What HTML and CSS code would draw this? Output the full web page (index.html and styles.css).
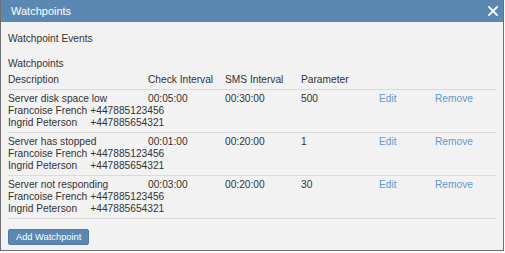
FILE: index.html
```html
<!DOCTYPE html>
<html lang="en">
<head>
    <meta charset="UTF-8">
    <meta name="viewport" content="width=device-width, initial-scale=1.0">
    <title>Watchpoints</title>
    <link rel="stylesheet" href="styles.css">
</head>
<body>
    <div class="dialog">
        <div class="dialog-header">
            <span class="dialog-title">Watchpoints</span>
            <button class="close-btn" aria-label="Close">
                <svg width="10" height="10" viewBox="0 0 10 10">
                    <path d="M1 1 L9 9 M9 1 L1 9" stroke="#fff" stroke-width="1.8" stroke-linecap="square"/>
                </svg>
            </button>
        </div>

        <div class="dialog-body">
            <div class="section-title events">Watchpoint Events</div>
            <div class="section-title">Watchpoints</div>

            <div class="wp-table">
                <div class="wp-row wp-head">
                    <div>Description</div>
                    <div>Check Interval</div>
                    <div>SMS Interval</div>
                    <div>Parameter</div>
                    <div></div>
                    <div></div>
                </div>

                <div class="wp-row">
                    <div>Server disk space low</div>
                    <div>00:05:00</div>
                    <div>00:30:00</div>
                    <div>500</div>
                    <div><a href="#" class="link">Edit</a></div>
                    <div><a href="#" class="link">Remove</a></div>
                    <div class="contacts">
                        <div>Francoise French</div><div>+447885123456</div>
                        <div>Ingrid Peterson</div><div>+447885654321</div>
                    </div>
                </div>

                <div class="wp-row">
                    <div>Server has stopped</div>
                    <div>00:01:00</div>
                    <div>00:20:00</div>
                    <div>1</div>
                    <div><a href="#" class="link">Edit</a></div>
                    <div><a href="#" class="link">Remove</a></div>
                    <div class="contacts">
                        <div>Francoise French</div><div>+447885123456</div>
                        <div>Ingrid Peterson</div><div>+447885654321</div>
                    </div>
                </div>

                <div class="wp-row">
                    <div>Server not responding</div>
                    <div>00:03:00</div>
                    <div>00:20:00</div>
                    <div>30</div>
                    <div><a href="#" class="link">Edit</a></div>
                    <div><a href="#" class="link">Remove</a></div>
                    <div class="contacts">
                        <div>Francoise French</div><div>+447885123456</div>
                        <div>Ingrid Peterson</div><div>+447885654321</div>
                    </div>
                </div>
            </div>

            <button class="add-btn">Add Watchpoint</button>
        </div>
    </div>
</body>
</html>
```

FILE: styles.css
```css
html {
    background: #fafafa;
}

body {
    margin: 0;
    font-family: "Liberation Sans", Arial, sans-serif;
    font-size: 10.2px;
    color: #333;
}

.dialog {
    width: 504px;
    height: 251px;
    box-sizing: border-box;
    border: 1px solid #6f6f6f;
    border-top: none;
    background: #f2f2f2;
}

.dialog-header {
    height: 22px;
    background: #5b88b3;
    display: flex;
    align-items: center;
    justify-content: space-between;
    padding: 0 5px 0 10px;
}

.dialog-title {
    color: #fff;
    font-size: 11px;
}

.close-btn {
    background: none;
    border: none;
    padding: 0;
    width: 10px;
    height: 10px;
    display: flex;
    cursor: pointer;
}

.dialog-body {
    padding: 0 7px;
}

.section-title {
    line-height: 12px;
}

.section-title.events {
    margin-top: 11px;
    margin-bottom: 13px;
}

.wp-row {
    display: grid;
    grid-template-columns: 140px 77px 76px 78px 56px auto;
    line-height: 12px;
    padding: 3px 0;
    border-bottom: 1px solid #dadada;
}

.wp-row > div {
    white-space: nowrap;
}

.wp-head {
    padding-top: 4px;
}

.contacts {
    grid-column: 1 / -1;
    display: grid;
    grid-template-columns: auto auto;
    justify-content: start;
    column-gap: 3px;
}

.link {
    color: #5f9ad0;
    text-decoration: none;
}

.add-btn {
    margin-top: 10px;
    height: 16px;
    padding: 0 7px;
    background: #5b88b3;
    border: 1px solid #4f7ca7;
    border-radius: 2px;
    color: #fff;
    font-family: "Liberation Sans", Arial, sans-serif;
    font-size: 9.3px;
    line-height: 14px;
    cursor: pointer;
}
```
